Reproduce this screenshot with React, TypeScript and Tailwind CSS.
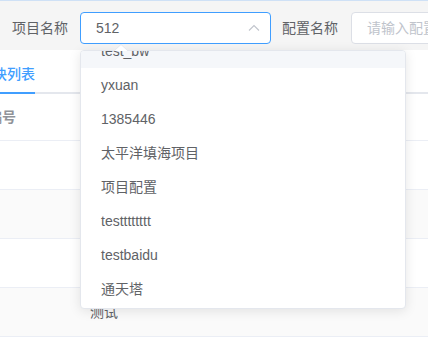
import React from "react";

const options = ["test_bw", "yxuan", "1385446", "太平洋填海项目", "项目配置", "testttttttt", "testbaidu", "通天塔"];

const rows = [
  { bg: "bg-white", name: "" },
  { bg: "bg-[#fafafa]", name: "" },
  { bg: "bg-white", name: "" },
  { bg: "bg-[#fafafa]", name: "测试" },
  { bg: "bg-white", name: "" },
];

export default function App() {
  return (
    <div className="relative h-[342px] w-[428px] overflow-hidden bg-white text-sm text-[#606266] font-['Liberation_Sans','Noto_Sans_CJK_SC',sans-serif]">
      <div className="h-px bg-[#cfe1f6]" />

      {/* search bar */}
      <div className="flex h-[49px] items-start bg-[#f5f5f5] pt-[11px]">
        <span className="w-[80px] shrink-0 pl-[12px] leading-[32px]">项目名称</span>
        <div className="flex h-[32px] w-[191px] shrink-0 items-center justify-between rounded border border-[#409eff] bg-white pl-[15px] pr-[10px]">
          <span className="leading-[30px]">512</span>
          <svg width="12" height="12" viewBox="0 0 12 12" fill="none" stroke="#c0c4cc" strokeWidth="1.1">
            <polyline points="1,8.5 6,3.5 11,8.5" />
          </svg>
        </div>
        <span className="ml-[11px] shrink-0 leading-[32px]">配置名称</span>
        <div className="ml-[13px] flex h-[32px] w-[180px] shrink-0 items-center rounded border border-[#dcdfe6] bg-white pl-[15px] text-[#c0c4cc]">
          <span className="whitespace-nowrap">请输入配置名称</span>
        </div>
      </div>

      {/* tabs */}
      <div className="flex h-[44px] border-b-2 border-[#e4e7ed]">
        <div className="-mb-[2px] -ml-[21px] h-[44px] border-b-2 border-[#409eff] pt-[14px] font-medium leading-[20px] text-[#409eff]">
          模块列表
        </div>
      </div>

      {/* table */}
      <div className="flex h-[47px] items-center border-b border-[#ebeef5] font-bold text-[#909399]">
        <span className="-ml-[12px]">编号</span>
      </div>
      {rows.map((r, i) => (
        <div key={i} className={`flex h-[49px] items-center border-b border-[#ebeef5] ${r.bg}`}>
          <span className="pl-[90px]">{r.name}</span>
        </div>
      ))}

      {/* select dropdown */}
      <div className="absolute left-[80px] top-[50px] h-[259px] w-[326px] overflow-hidden rounded border border-[#e4e7ed] bg-white shadow-[0_2px_12px_0_rgba(0,0,0,0.1)]">
        <div className="-mt-[17px]">
          {options.map((o, i) => (
            <div
              key={o}
              className={`h-[34px] whitespace-nowrap px-[20px] leading-[34px] ${i === 0 ? "bg-[#f5f7fa]" : ""}`}
            >
              {o}
            </div>
          ))}
        </div>
      </div>
      <svg className="absolute left-[114px] top-[44px]" width="14" height="7" viewBox="0 0 14 7">
        <polygon points="0,7 7,0.5 14,7" fill="#ffffff" />
        <polyline points="0,7 7,0.5 14,7" fill="none" stroke="#e4e7ed" strokeWidth="1" />
      </svg>
    </div>
  );
}
